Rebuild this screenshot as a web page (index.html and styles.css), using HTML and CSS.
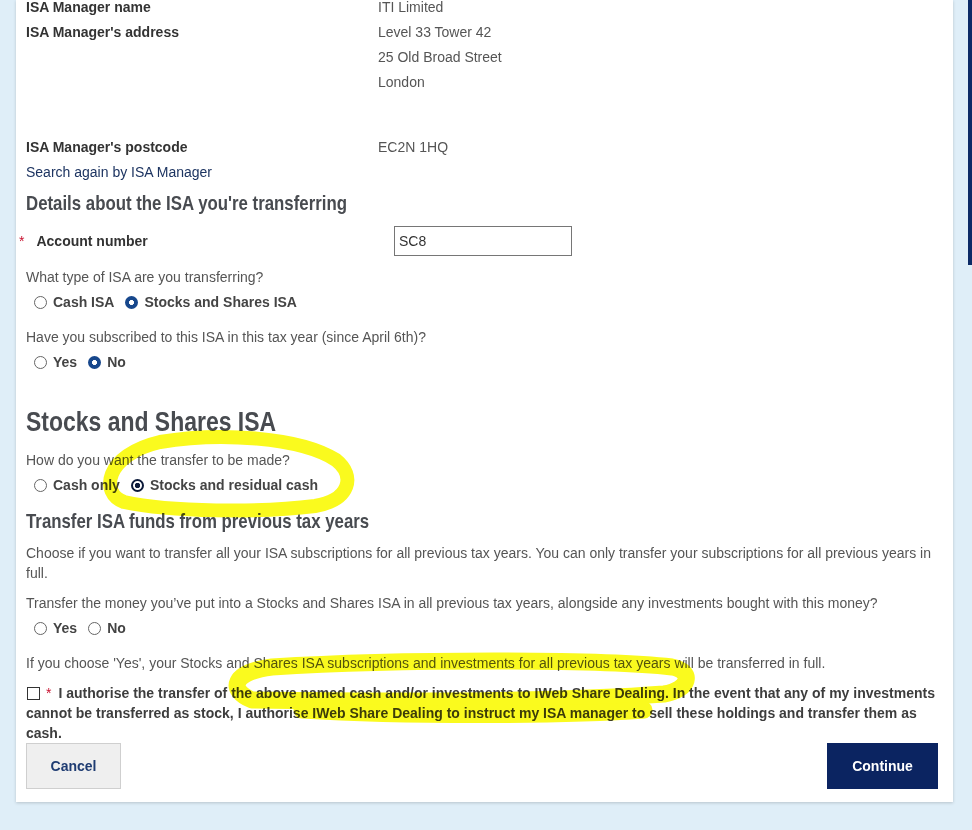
FILE: index.html
```html
<!DOCTYPE html>
<html lang="en">
<head>
    <meta charset="UTF-8">
    <title>ISA Transfer</title>
    <link rel="stylesheet" href="styles.css">
</head>
<body>

    <div class="page">
        <main class="card">
            <dl class="manager">
                <div class="row"><dt>ISA Manager name</dt><dd>ITI Limited</dd></div>
                <div class="row"><dt>ISA Manager's address</dt><dd>Level 33 Tower 42<br>25 Old Broad Street<br>London</dd></div>
                <div class="row postcode"><dt>ISA Manager's postcode</dt><dd>EC2N 1HQ</dd></div>
            </dl>
            <a class="search-again" href="#">Search again by ISA Manager</a>

            <h3 class="section-title">Details about the ISA you're transferring</h3>

            <div class="account">
                <label for="account"><span class="required">*</span>Account number</label>
                <input type="text" id="account" value="SC8">
            </div>

            <p class="question first">What type of ISA are you transferring?</p>
            <div class="options">
                <label class="option"><span class="radio"></span>Cash ISA</label>
                <label class="option"><span class="radio checked"></span>Stocks and Shares ISA</label>
            </div>

            <p class="question">Have you subscribed to this ISA in this tax year (since April 6th)?</p>
            <div class="options">
                <label class="option"><span class="radio"></span>Yes</label>
                <label class="option"><span class="radio checked"></span>No</label>
            </div>

            <h2 class="big-title">Stocks and Shares ISA</h2>
            <p class="question after-title">How do you want the transfer to be made?</p>
            <div class="options">
                <label class="option"><span class="radio"></span>Cash only</label>
                <label class="option"><span class="radio focused"></span>Stocks and residual cash</label>
            </div>

            <h3 class="section-title funds">Transfer ISA funds from previous tax years</h3>
            <p class="para">Choose if you want to transfer all your ISA subscriptions for all previous tax years. You can only transfer your subscriptions for all previous years in full.</p>
            <p class="question after-para">Transfer the money you’ve put into a Stocks and Shares ISA in all previous tax years, alongside any investments bought with this money?</p>
            <div class="options">
                <label class="option"><span class="radio"></span>Yes</label>
                <label class="option"><span class="radio"></span>No</label>
            </div>

            <p class="question">If you choose 'Yes', your Stocks and Shares ISA subscriptions and investments for all previous tax years will be transferred in full.</p>

            <p class="consent"><span class="box"></span><span class="required">*</span>I authorise the transfer of the above named cash and/or investments to IWeb Share Dealing. In the event that any of my investments cannot be transferred as stock, I authorise IWeb Share Dealing to instruct my ISA manager to sell these holdings and transfer them as cash.</p>

            <div class="actions">
                <button class="btn-cancel">Cancel</button>
                <button class="btn-continue">Continue</button>
            </div>
        </main>

        <div class="side">
            <div class="scroll-thumb"></div>
        </div>

        <!-- highlighter marks drawn over the form -->
        <svg class="marker" width="972" height="830" viewBox="0 0 972 830">
            <path d="M160 442 C220 432 300 437 336 460 C356 476 350 500 315 506 C260 513 170 512 124 502 C100 494 104 455 160 442 Z"/>
            <path class="thick" d="M252 700 C228 690 232 672 272 667 C400 659 600 659 672 667 C694 671 690 690 664 694 C560 702 400 702 252 700 Z"/>
            <path class="thick" d="M302 710 C400 716 560 716 644 710"/>
        </svg>
    </div>

</body>
</html>
```

FILE: styles.css
```css
* {
    box-sizing: border-box;
}

body {
    margin: 0;
    background-color: #dfeef8;
    font-family: "Liberation Sans", Arial, sans-serif;
    font-size: 14px;
    color: #555;
}

.page {
    position: relative;
    display: flex;
    padding-left: 16px;
    height: 830px;
    overflow: hidden;
}

.card {
    width: 937px;
    align-self: flex-start;
    background-color: #fff;
    padding: 0 15px 13px 10px;
    box-shadow: 0 1px 3px rgba(0, 0, 0, 0.18);
}

.side {
    width: 19px;
}

.scroll-thumb {
    margin-left: 15px;
    width: 4px;
    height: 265px;
    background-color: #0b2a66;
}

/* manager details */
.manager {
    margin: -5px 0 0;
    line-height: 25px;
}

.row {
    display: grid;
    grid-template-columns: 352px 1fr;
}

dt {
    font-weight: bold;
    color: #333;
}

dd {
    margin: 0;
}

.postcode {
    margin-top: 40px;
}

.search-again {
    display: block;
    line-height: 25px;
    color: #1d3461;
    text-decoration: none;
}

/* headings - narrow bold, squeezed from Liberation Sans */
.section-title,
.big-title {
    font-family: "Liberation Sans", Arial, sans-serif;
    font-weight: bold;
    color: #484b50;
    transform: scaleX(0.82);
    transform-origin: 0 50%;
    white-space: nowrap;
}

.section-title {
    font-size: 20.5px;
    line-height: 30px;
    margin: 3px 0 0;
}

.section-title.funds {
    margin-top: 11px;
}

.big-title {
    font-size: 28px;
    line-height: 36px;
    margin: 32px 0 0;
}

/* account row */
.account {
    display: grid;
    grid-template-columns: 375px 178px;
    align-items: center;
    margin: 8px 0 0 -7px;
}

.account label {
    font-weight: bold;
    color: #333;
}

.required {
    margin-right: 12px;
    color: #c8102e;
    font-weight: normal;
}

.account input {
    width: 178px;
    height: 30px;
    border: 1px solid #767676;
    padding: 0 4px;
    font-family: "Liberation Sans", Arial, sans-serif;
    font-size: 14px;
    color: #333;
    outline: none;
}

/* questions and options */
.question,
.para {
    margin: 15px 0 0;
    line-height: 20px;
}

.question.first {
    margin-top: 11px;
}

.question.after-title,
.question.after-para {
    margin-top: 10px;
}

.para {
    margin-top: 7px;
}

.options {
    display: flex;
    gap: 11px;
    margin-top: 5px;
    padding-left: 8px;
    line-height: 20px;
}

.option {
    display: flex;
    align-items: center;
    gap: 6px;
    font-weight: bold;
    color: #444;
}

.radio {
    width: 13px;
    height: 13px;
    border-radius: 50%;
    border: 1.5px solid #666;
    background-color: #fff;
}

.radio.checked {
    border: none;
    background: radial-gradient(circle, #fff 0 2.2px, #17478c 2.8px);
}

.radio.focused {
    border: 2px solid #0c1a3a;
    background: radial-gradient(circle, #0c1a3a 0 2.4px, #fff 3px);
}

/* consent */
.consent {
    margin: 10px 0 0;
    line-height: 20px;
    font-weight: bold;
    color: #3d3d3d;
}

.box {
    display: inline-block;
    width: 13px;
    height: 13px;
    border: 1px solid #333;
    margin: 0 6px 0 1px;
    vertical-align: -2px;
}

.consent .required {
    margin-right: 7px;
}

/* buttons */
.actions {
    display: flex;
    justify-content: space-between;
}

.actions button {
    height: 46px;
    font-family: "Liberation Sans", Arial, sans-serif;
    font-size: 14px;
    font-weight: bold;
    cursor: pointer;
}

.btn-cancel {
    width: 95px;
    background-color: #efefef;
    border: 1px solid #cfcfcf;
    color: #1f3c72;
}

.btn-continue {
    width: 111px;
    background-color: #0b2461;
    border: none;
    color: #fff;
}

/* highlighter */
.marker {
    position: absolute;
    top: 0;
    left: 0;
    pointer-events: none;
    mix-blend-mode: multiply;
}

.marker path {
    fill: none;
    stroke: #fafa1e;
    stroke-width: 14;
    stroke-linecap: round;
    stroke-linejoin: round;
}

.marker path.thick {
    stroke-width: 17;
}
```
